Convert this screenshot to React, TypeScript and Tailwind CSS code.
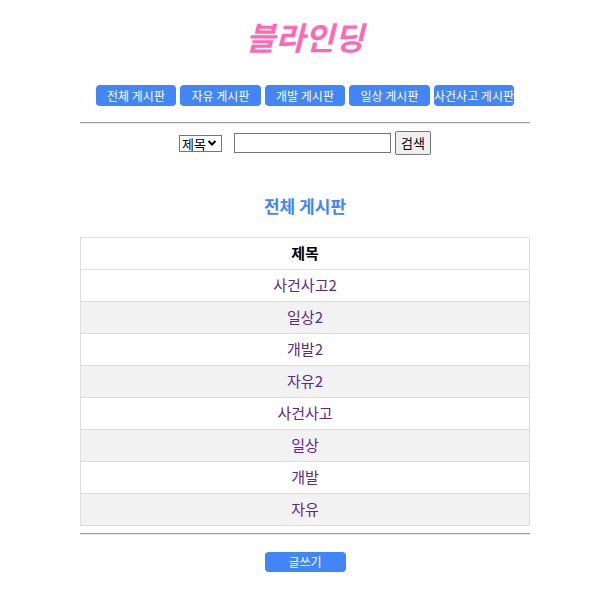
import React from "react";

const boards = ["전체 게시판", "자유 게시판", "개발 게시판", "일상 게시판", "사건사고 게시판"];
const posts = ["사건사고2", "일상2", "개발2", "자유2", "사건사고", "일상", "개발", "자유"];

export default function App() {
  return (
    <div className="w-[599px] h-[591px] bg-white" style={{ fontFamily: '"Noto Sans CJK KR", "Noto Sans", sans-serif' }}>
      <div className="ml-[80px] w-[450px] flex flex-col items-center">
        <h1 className="mt-[14px] h-[44px] text-[32px] leading-[44px] font-bold italic text-[#ff69b4]">블라인딩</h1>
        <div className="mt-[27px] flex gap-[4px]">
          {boards.map((b) => (
            <button key={b} className="w-[80.5px] h-[21px] rounded-[4px] bg-[#4285f4] text-white text-[12px] leading-[21px] whitespace-nowrap flex items-center justify-center">
              {b}
            </button>
          ))}
        </div>
        <div className="mt-[16px] w-full border-t border-[#a0a0a0] border-b border-b-[#e6e6e6]" />
        <div className="mt-[7px] flex items-center gap-[4px]">
          <div className="w-[43px] h-[17px] border border-[#767676] text-[13px] leading-[15px] flex items-center pl-[2px] text-black">
            제목
            <svg width="10" height="8" viewBox="0 0 10 8" className="ml-[1px]"><path d="M1.5 2 L5 5.5 L8.5 2" stroke="black" strokeWidth="2" fill="none" /></svg>
          </div>
          <div className="ml-[8px] w-[157px] h-[20px] border border-[#767676]" />
          <button className="w-[36px] h-[24px] border border-[#767676] rounded-[2px] bg-[#efefef] text-[13px] text-black flex items-center justify-center">검색</button>
        </div>
        <h2 className="mt-[38px] text-[17px] leading-[26px] font-bold text-[#4285f4]">전체 게시판</h2>
        <div className="mt-[18px] w-full border border-[#dddddd]">
          <div className="h-[32px] flex items-center justify-center text-[15px] font-bold text-black border-b border-[#dddddd]">제목</div>
          {posts.map((p, i) => (
            <div key={p} className={`flex items-center justify-center text-[15px] text-[#5a2a8a] ${i < posts.length - 1 ? "h-[32px] border-b border-[#dddddd]" : "h-[31px]"} ${i % 2 === 1 ? "bg-[#f2f2f2]" : "bg-white"}`}>
              {p}
            </div>
          ))}
        </div>
        <div className="mt-[7px] w-full border-t border-[#a0a0a0] border-b border-b-[#e6e6e6]" />
        <button className="mt-[17px] w-[81px] h-[20px] rounded-[4px] bg-[#4285f4] text-white text-[12px] flex items-center justify-center">글쓰기</button>
      </div>
    </div>
  );
}
